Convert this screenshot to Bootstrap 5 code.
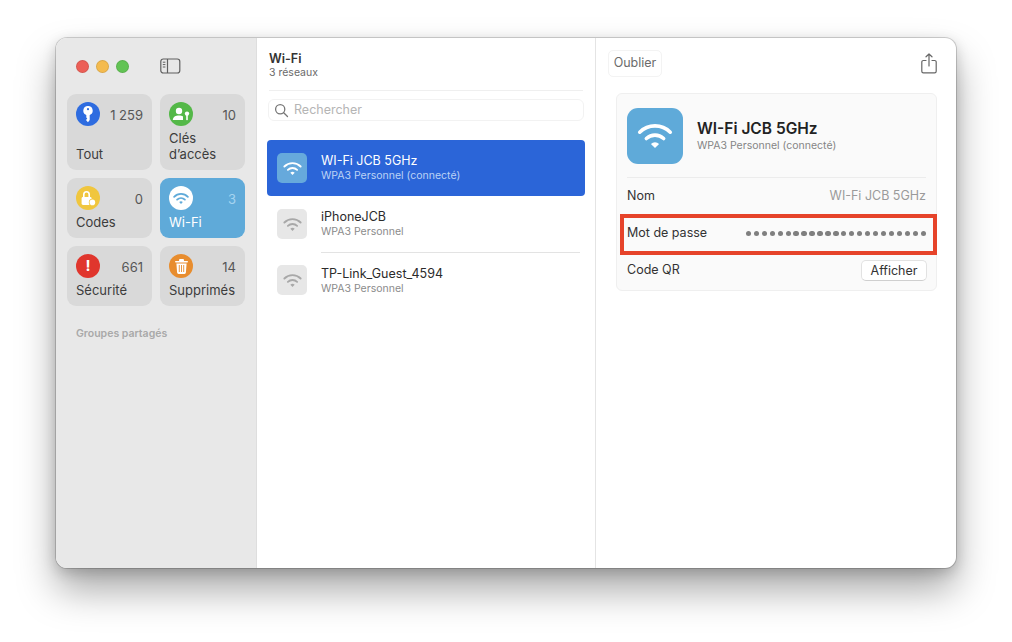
<!DOCTYPE html>
<html lang="fr">

<head>
    <meta charset="UTF-8">
    <meta name="viewport" content="width=device-width, initial-scale=1.0">
    <title>Mots de passe - Wi-Fi</title>
    <link href="https://cdn.jsdelivr.net/npm/bootstrap@5.3.0/dist/css/bootstrap.min.css" rel="stylesheet">
    <style>
        body {
            background: #fff;
            font-family: Inter, "Liberation Sans", sans-serif;
            color: #2b2b2b;
            padding: 38px 56px 0;
            height: 642px;
            overflow: hidden;
        }
        .mac-window {
            width: 900px;
            height: 530px;
            border-radius: 11px;
            overflow: hidden;
            background: #fff;
            box-shadow: 0 0 0 1px rgba(0, 0, 0, .16), 0 22px 38px rgba(0, 0, 0, .34), 0 4px 14px rgba(0, 0, 0, .18);
        }
        .window-wrap { border-radius: 11px; }

        /* sidebar */
        .side { width: 201px; background: #e8e8e8; border-right: 1px solid #dedede; padding: 0 11px; }
        .titlebar { height: 56px; gap: 7px; padding-left: 9px; }
        .light { width: 13px; height: 13px; border-radius: 50%; border: 1px solid rgba(0, 0, 0, .1); }
        .tiles { display: grid; grid-template-columns: 85px 85px; grid-template-rows: 76px 60px 60px; gap: 8px; }
        .tile { background: #d9d9d9; border-radius: 9px; padding: 0 9px; position: relative; font-size: 13px; line-height: 16px; color: #3c3c3c; }
        .tile.active { background: #5faad9; color: #fff; }
        .tile .round { width: 24px; height: 24px; border-radius: 50%; margin-top: 8px; }
        .tile .num { font-size: 13px; color: #565656; margin-top: 13px; line-height: 16px; }
        .tile.active .num { color: #a5d4f0; }
        .tile .lbl { position: absolute; left: 9px; bottom: 8px; }
        .side-title { font-size: 10.5px; font-weight: 600; color: #a9a9a9; margin: 21px 0 0 9px; line-height: 13px; }

        /* list */
        .list-pane { width: 339px; border-right: 1px solid #e4e4e4; padding: 0 10px; }
        .list-head { height: 53px; margin: 0 2px; padding: 13px 0 0 0; border-bottom: 1px solid #efefef; }
        .list-head h1 { font-size: 12.5px; font-weight: 600; line-height: 15px; margin: 0; color: #333; }
        .list-head p { font-size: 10.5px; line-height: 13px; margin: 0; color: #6a6a6a; }
        .search { height: 22px; margin: 8px 1px 19px; border: 1px solid #f2f2f2; border-radius: 6px; padding-left: 5px; gap: 5px; font-size: 12.5px; color: #b5b5b5; }
        .net { height: 56px; border-radius: 4px; padding-left: 10px; gap: 14px; }
        .net.selected { background: #2b65d8; color: #fff; }
        .net .tile-ico { width: 30px; height: 30px; border-radius: 5px; background: #e7e7e7; flex: none; }
        .net.selected .tile-ico { background: #66a9dc; }
        .net-text { flex: 1; align-self: stretch; margin-right: 5px; display: flex; flex-direction: column; justify-content: center; }
        .net-text b { font-weight: 400; font-size: 12.5px; line-height: 16px; color: #2b2b2b; }
        .net-text small { font-size: 10.5px; line-height: 14px; color: #8b8b8b; }
        .net.selected b { color: #fff; }
        .net.selected small { color: #bcd3f5; }
        .net + .net .net-text { border-top: 1px solid #e3e3e3; }

        /* detail */
        .detail { flex: 1; padding: 12px 19px 0 12px; }
        .btn-forget { font-size: 12.5px; color: #6c6c6c; height: 27px; width: 54px; padding: 0; background: #fff; border: 1px solid #f3f3f3; border-radius: 5px; }
        .pass-card { margin: 16px 0 0 8px; background: #fafafa; border: 1px solid #efefef; border-radius: 6px; height: 198px; padding: 0 10px; }
        .pass-head { height: 84px; gap: 14px; padding-top: 0; border-bottom: 1px solid #ececec; }
        .big-ico { width: 56px; height: 56px; border-radius: 11px; background: #5faad9; flex: none; }
        .pass-head h2 { font-size: 15.5px; font-weight: 600; margin: 0; line-height: 20px; color: #222; }
        .pass-head p { font-size: 10.5px; margin: 0; line-height: 14px; color: #858585; }
        .row-line { height: 37px; font-size: 12.5px; color: #333; position: relative; }
        .row-line .val { color: #9a9a9a; }
        .dots { display: flex; gap: 2.67px; }
        .dots i { width: 5.3px; height: 5.3px; border-radius: 50%; background: #7f7f7f; }
        .red-box { position: absolute; left: -7px; right: -11px; top: -1px; bottom: -3px; border: 4px solid #e6432a; }
        .btn-show { font-size: 12.5px; height: 21px; width: 66px; padding: 0; background: #fff; color: #333; border: 1px solid #e2e2e2; border-bottom-color: #cfcfcf; border-radius: 5px; margin-right: -1px; line-height: 18px; }
    </style>
</head>

<body>
    <div class="mac-window d-flex">
        <!-- Sidebar -->
        <div class="side flex-shrink-0">
            <div class="titlebar d-flex align-items-center">
                <span class="light" style="background:#ec5f57"></span>
                <span class="light" style="background:#f4bb4f"></span>
                <span class="light" style="background:#62c354"></span>
                <svg class="ms-4" width="21" height="16" viewBox="0 0 21 16" fill="none" stroke="#5f5f5f" stroke-width="1.2">
                    <rect x=".8" y="1" width="19" height="14" rx="2.5"/>
                    <path d="M7.5 1v14"/>
                    <path d="M2.8 4.2h2.6M2.8 6.6h2.6M2.8 9h2.6" stroke-width="1"/>
                </svg>
            </div>
            <div class="tiles mt-0" style="margin-top:0">
                <div class="tile d-flex justify-content-between align-items-start">
                    <span class="round d-flex align-items-center justify-content-center" style="background:#2e6ce0">
                        <svg width="12" height="17" viewBox="0 0 12 17" fill="#fff"><path d="M6 0a4.6 4.6 0 0 1 1.7 8.9V14L6 16.2 4.3 14.5v-1l1-1-1-1V8.9A4.6 4.6 0 0 1 6 0z"/><circle cx="6" cy="3.2" r="1.1" fill="#2e6ce0"/></svg>
                    </span>
                    <span class="num">1 259</span>
                    <span class="lbl">Tout</span>
                </div>
                <div class="tile d-flex justify-content-between align-items-start">
                    <span class="round d-flex align-items-center justify-content-center" style="background:#54b848">
                        <svg width="19" height="15" viewBox="0 0 19 15" fill="#fff"><circle cx="7" cy="4" r="3.2"/><path d="M.8 13c0-3.2 2.8-4.6 6.2-4.6 1.6 0 3 .3 4 1V13z"/><circle cx="15" cy="6.6" r="2.2"/><path d="M14.2 8h1.6v4.4L15 13.6l-.8-1z"/></svg>
                    </span>
                    <span class="num">10</span>
                    <span class="lbl">Clés<br>d’accès</span>
                </div>
                <div class="tile d-flex justify-content-between align-items-start">
                    <span class="round d-flex align-items-center justify-content-center" style="background:#f0c63e">
                        <svg width="18" height="17" viewBox="0 0 18 17" fill="#fff"><path d="M4 7V4.5a3.5 3.5 0 0 1 7 0V7h-1.6V4.5a1.9 1.9 0 0 0-3.8 0V7z"/><rect x="2.6" y="7" width="10" height="8" rx="1.4"/><circle cx="13.4" cy="12.4" r="3.6" fill="#f0c63e"/><circle cx="13.4" cy="12.4" r="2.8"/></svg>
                    </span>
                    <span class="num">0</span>
                    <span class="lbl">Codes</span>
                </div>
                <div class="tile active d-flex justify-content-between align-items-start">
                    <span class="round d-flex align-items-center justify-content-center" style="background:#fff">
                        <svg width="16" height="13" viewBox="0 0 28 22" fill="none" stroke="#5faad9" stroke-width="3.2" stroke-linecap="round"><path d="M2 8a17 17 0 0 1 24 0"/><path d="M7.2 13a10 10 0 0 1 13.6 0"/><path d="M14 20.5l-3.2-3.2a4.6 4.6 0 0 1 6.4 0z" fill="#5faad9" stroke="none"/></svg>
                    </span>
                    <span class="num">3</span>
                    <span class="lbl">Wi-Fi</span>
                </div>
                <div class="tile d-flex justify-content-between align-items-start">
                    <span class="round d-flex align-items-center justify-content-center text-white fw-bold" style="background:#e0362d;font-size:15px">!</span>
                    <span class="num">661</span>
                    <span class="lbl">Sécurité</span>
                </div>
                <div class="tile d-flex justify-content-between align-items-start">
                    <span class="round d-flex align-items-center justify-content-center" style="background:#e88d2e">
                        <svg width="13" height="15" viewBox="0 0 13 15" fill="#fff"><rect x="0" y="2" width="13" height="1.6" rx=".8"/><rect x="4" y="0" width="5" height="2.4" rx="1"/><path d="M1.4 4.4h10.2l-.7 9.2a1.4 1.4 0 0 1-1.4 1.3H3.5a1.4 1.4 0 0 1-1.4-1.3z"/><path d="M4.3 6v7M6.5 6v7M8.7 6v7" stroke="#e88d2e" stroke-width=".9"/></svg>
                    </span>
                    <span class="num">14</span>
                    <span class="lbl">Supprimés</span>
                </div>
            </div>
            <div class="side-title">Groupes partagés</div>
        </div>

        <!-- Network list -->
        <div class="list-pane flex-shrink-0">
            <div class="list-head">
                <h1>Wi-Fi</h1>
                <p>3 réseaux</p>
            </div>
            <div class="search d-flex align-items-center">
                <svg width="15" height="15" viewBox="0 0 15 15" fill="none" stroke="#777" stroke-width="1.3" stroke-linecap="round"><circle cx="6.2" cy="6.2" r="4.6"/><path d="M9.7 9.7l3.8 3.8"/></svg>
                <span>Rechercher</span>
            </div>
            <div class="net selected d-flex align-items-center">
                <span class="tile-ico d-flex align-items-center justify-content-center">
                    <svg width="19" height="15" viewBox="0 0 28 22" fill="none" stroke="#fff" stroke-width="2.8" stroke-linecap="round"><path d="M2 8a17 17 0 0 1 24 0"/><path d="M7.2 13a10 10 0 0 1 13.6 0"/><path d="M14 20.5l-3.2-3.2a4.6 4.6 0 0 1 6.4 0z" fill="#fff" stroke="none"/></svg>
                </span>
                <div class="net-text"><b>WI-Fi JCB 5GHz</b><small>WPA3 Personnel (connecté)</small></div>
            </div>
            <div class="net d-flex align-items-center">
                <span class="tile-ico d-flex align-items-center justify-content-center">
                    <svg width="19" height="15" viewBox="0 0 28 22" fill="none" stroke="#a8a8a8" stroke-width="2.8" stroke-linecap="round"><path d="M2 8a17 17 0 0 1 24 0"/><path d="M7.2 13a10 10 0 0 1 13.6 0"/><path d="M14 20.5l-3.2-3.2a4.6 4.6 0 0 1 6.4 0z" fill="#a8a8a8" stroke="none"/></svg>
                </span>
                <div class="net-text" style="border-top:0"><b>iPhoneJCB</b><small>WPA3 Personnel</small></div>
            </div>
            <div class="net d-flex align-items-center">
                <span class="tile-ico d-flex align-items-center justify-content-center">
                    <svg width="19" height="15" viewBox="0 0 28 22" fill="none" stroke="#a8a8a8" stroke-width="2.8" stroke-linecap="round"><path d="M2 8a17 17 0 0 1 24 0"/><path d="M7.2 13a10 10 0 0 1 13.6 0"/><path d="M14 20.5l-3.2-3.2a4.6 4.6 0 0 1 6.4 0z" fill="#a8a8a8" stroke="none"/></svg>
                </span>
                <div class="net-text"><b>TP-Link_Guest_4594</b><small>WPA3 Personnel</small></div>
            </div>
        </div>

        <!-- Detail -->
        <div class="detail">
            <div class="d-flex justify-content-between align-items-center">
                <button class="btn btn-forget" type="button">Oublier</button>
                <svg width="16" height="21" viewBox="0 0 16 21" fill="none" stroke="#666" stroke-width="1.2" stroke-linecap="round" stroke-linejoin="round"><path d="M5 7.5H2.4A1.6 1.6 0 0 0 .8 9.1v9.1a1.6 1.6 0 0 0 1.6 1.6h11.2a1.6 1.6 0 0 0 1.6-1.6V9.1a1.6 1.6 0 0 0-1.6-1.6H11"/><path d="M8 13V1M5 3.8L8 1l3 2.8"/></svg>
            </div>
            <div class="pass-card">
                <div class="pass-head d-flex align-items-center">
                    <span class="big-ico d-flex align-items-center justify-content-center">
                        <svg width="36" height="28" viewBox="0 0 28 22" fill="none" stroke="#fff" stroke-width="2.8" stroke-linecap="round"><path d="M2 8a17 17 0 0 1 24 0"/><path d="M7.2 13a10 10 0 0 1 13.6 0"/><path d="M14 20.5l-3.2-3.2a4.6 4.6 0 0 1 6.4 0z" fill="#fff" stroke="none"/></svg>
                    </span>
                    <div>
                        <h2>WI-Fi JCB 5GHz</h2>
                        <p>WPA3 Personnel (connecté)</p>
                    </div>
                </div>
                <div class="row-line d-flex justify-content-between align-items-center">
                    <span>Nom</span><span class="val">WI-Fi JCB 5GHz</span>
                </div>
                <div class="row-line d-flex justify-content-between align-items-center">
                    <span>Mot de passe</span>
                    <span class="dots"><i></i><i></i><i></i><i></i><i></i><i></i><i></i><i></i><i></i><i></i><i></i><i></i><i></i><i></i><i></i><i></i><i></i><i></i><i></i><i></i><i></i><i></i><i></i></span>
                    <span class="red-box"></span>
                </div>
                <div class="row-line d-flex justify-content-between align-items-center">
                    <span>Code QR</span>
                    <button class="btn btn-show" type="button">Afficher</button>
                </div>
            </div>
        </div>
    </div>
    <script src="https://cdn.jsdelivr.net/npm/bootstrap@5.3.0/dist/js/bootstrap.bundle.min.js"></script>
</body>

</html>
